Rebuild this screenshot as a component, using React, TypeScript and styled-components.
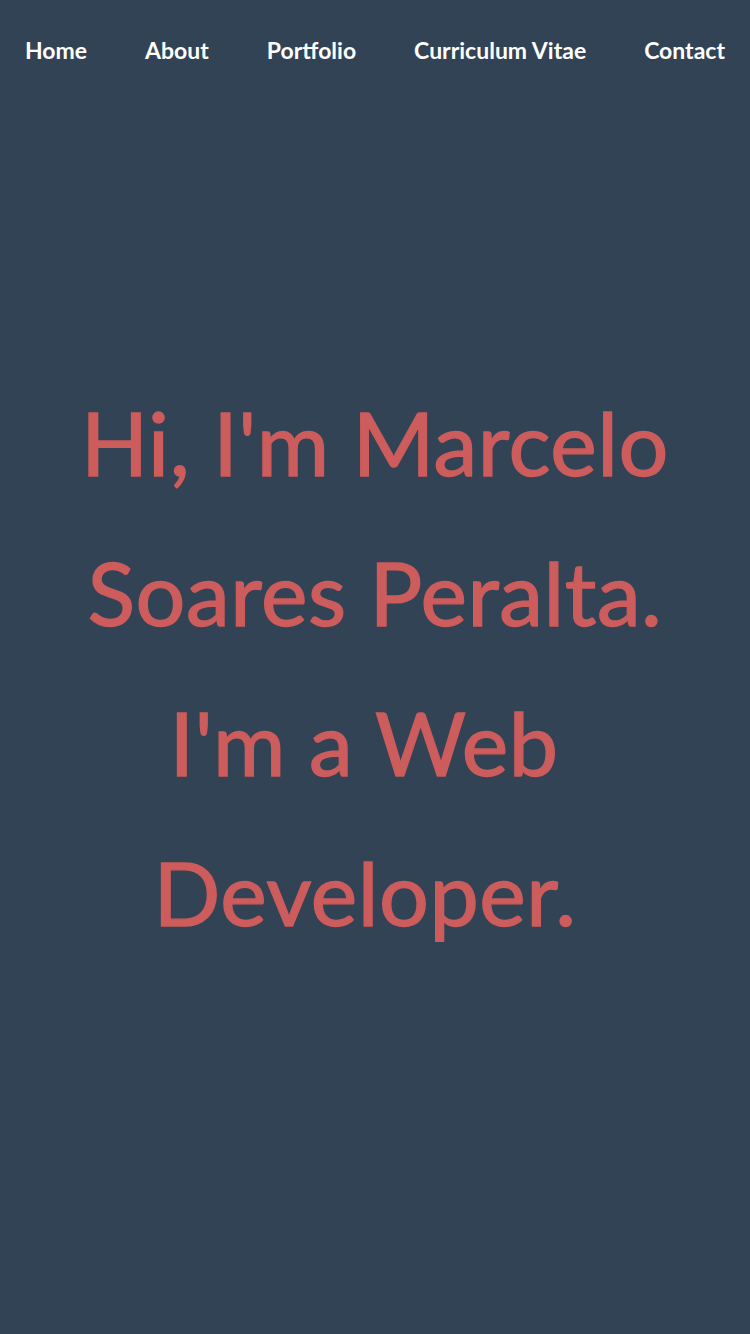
import React from "react";
import styled, { createGlobalStyle } from "styled-components";

const Global = createGlobalStyle`
  html, body { margin: 0; padding: 0; background: #324355; }
  * { box-sizing: border-box; }
`;

const Page = styled.div`
  position: relative;
  min-height: 100vh;
  background: #324355;
  font-family: "Lato", "Open Sans", sans-serif;
`;

const Header = styled.nav`
  position: absolute;
  top: 0;
  left: 0;
  right: 0;
  height: 100px;
  display: flex;
  align-items: center;
  justify-content: space-between;
  padding: 0 25px;
`;

const NavLink = styled.a`
  color: #ffffff;
  font-size: 23px;
  font-weight: 700;
  text-decoration: none;
  line-height: 1;
`;

const Hero = styled.section`
  min-height: 100vh;
  display: flex;
  align-items: center;
  justify-content: center;
  padding: 0 40px;
`;

const Title = styled.h1`
  margin: 0;
  text-align: center;
  color: #cd5c5c;
  font-size: 88px;
  font-weight: 400;
  line-height: 150px;
  letter-spacing: 0.5px;
  -webkit-text-stroke: 1.4px #cd5c5c;
`;

const Line = styled.span<{ $pad?: number }>`
  display: block;
  white-space: nowrap;
  padding-right: ${(p) => p.$pad ?? 0}px;
`;

export default function App() {
  const links = ["Home", "About", "Portfolio", "Curriculum Vitae", "Contact"];
  return (
    <Page>
      <Global />
      <Header>
        {links.map((l) => (
          <NavLink key={l} href="#">
            {l}
          </NavLink>
        ))}
      </Header>
      <Hero>
        <Title>
          <Line>Hi, I'm Marcelo</Line>
          <Line>Soares Peralta.</Line>
          <Line $pad={22}>I'm a Web</Line>
          <Line $pad={20}>Developer.</Line>
        </Title>
      </Hero>
    </Page>
  );
}
